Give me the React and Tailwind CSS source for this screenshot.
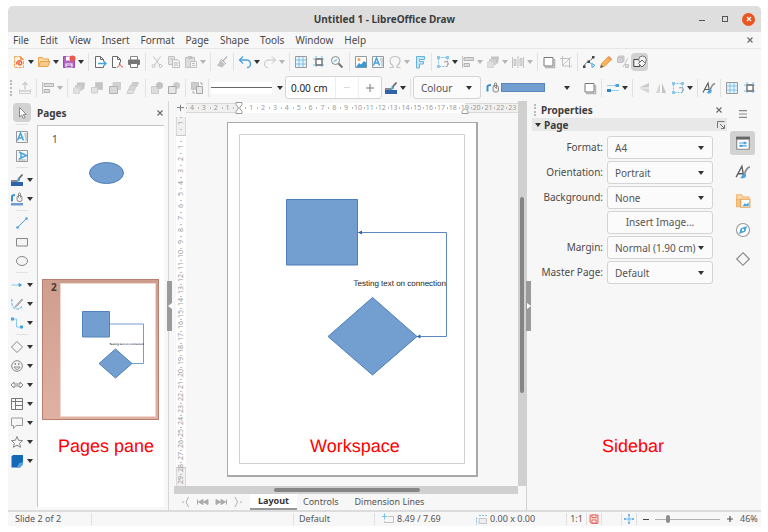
import React from "react";

const G = "#c2c2c2";
const D = "#6a6a6a";
const B = "#4aa3dc";

const icons = {
  newDoc: (
    <>
      <path d="M2.500 1.500h6l3 3v8h-9z" fill="#fdf3e7" stroke="#efa24c" strokeDasharray="3 1" />
      <path d="M8.500 1.500l3 3h-3z" fill="#f2994a" stroke="#f2994a" />
      <path d="M4.500 9.500c0-3 2-4 4-3.500s1.500 4-.5 4-2-2 0-2.500" stroke="#ee6a45" strokeWidth="1.500" />
    </>
  ),
  open: (
    <>
      <path d="M1.500 11.500v-9h4l1 1.500h5v2" fill="#fbd9a6" stroke="#eda24e" />
      <path d="M1.500 11.500l2-5h9.500l-2 5z" fill="#f9c98a" stroke="#eda24e" />
    </>
  ),
  save: (
    <>
      <path d="M1.500 1.500h9l2 2v9h-11z" fill="#b066c2" stroke="#9a48b0" />
      <path d="M4 1.500h5v4H4zM3.500 8.500h7v4h-7z" fill="#fff" />
      <path d="M4.500 10h5M4.500 11.500h5" stroke="#a04fb5" />
      <circle cx="10.500" cy="3.500" r="3" fill="#ef5350" />
    </>
  ),
  exportDoc: (
    <>
      <path d="M10.500 6V4.500l-3-3h-5v11h8v-1.500" fill="#fff" stroke={D} />
      <path d="M7.500 1.500v3h3" stroke={D} />
      <path d="M5 8.500h8M10.500 6l2.500 2.500-2.500 2.500" stroke={B} strokeWidth="1.300" />
    </>
  ),
  pdf: (
    <>
      <path d="M6 12.500H2.500v-11h5l3 3v3" fill="#fff" stroke={D} />
      <path d="M7.500 1.500v3h3" stroke={D} />
      <path d="M7 12.500c2-1 3-3 2.500-5 .5 3 1.500 4 3.500 4.500" stroke="#e0483e" />
    </>
  ),
  print: (
    <>
      <path d="M3.500 5V1.500h7V5" fill="#fff" stroke="#888" />
      <rect x="1" y="4.500" width="12" height="5.500" rx="1" fill="#757575" />
      <path d="M3.500 8.500h7v4h-7z" fill="#fff" stroke="#777" />
    </>
  ),
  cut: (
    <>
      <path d="M3.500 1.500l6 8.500M10.500 1.500l-6 8.500" stroke={G} />
      <circle cx="3.500" cy="11" r="1.500" stroke={G} />
      <circle cx="10.500" cy="11" r="1.500" stroke={G} />
    </>
  ),
  copy: (
    <>
      <path d="M1.500 1.500h6v8h-6z" fill="#e3e3e3" stroke={G} />
      <path d="M5.500 4.500h5l2 2v6h-7z" fill="#eee" stroke={G} />
      <path d="M7 8h4M7 10h4M3 4h3" stroke={G} />
    </>
  ),
  paste: (
    <>
      <path d="M1.500 2.500h9v10h-9z" fill="#ddd" stroke={G} />
      <path d="M4 1.500h4v2H4z" fill={G} stroke={G} />
      <path d="M6.500 6.500h6v6h-6z" fill="#f4f4f4" stroke={G} />
      <path d="M8 8.500h3M8 10.500h3" stroke={G} />
    </>
  ),
  brush: (
    <>
      <path d="M12 1.500L8 6" stroke={G} strokeWidth="1.800" />
      <path d="M5 4.500l5 5-3 3-5.500-2c2-1 3-3 3.500-6z" fill={G} />
      <path d="M6 4l5 5" stroke="#a5a5a5" />
    </>
  ),
  undo: <path d="M5 1.500L1.500 5 5 8.500M1.500 5H8c3 0 4.500 1.500 4.500 4S11 12.500 9 12.500" stroke={B} strokeWidth="1.300" />,
  redo: <path d="M9 1.500L12.500 5 9 8.500M12.500 5H6C3 5 1.500 6.500 1.500 9S3 12.500 5 12.500" stroke={G} />,
  grid: (
    <>
      <path d="M1.500 1.500h11v11h-11z" fill="#eaf5fc" stroke="#999" />
      <path d="M5 2v10M9 2v10M2 5h10M2 9h10" stroke="#7cc0e9" />
    </>
  ),
  snap: (
    <>
      <path d="M4 1v12M10 1v12M1 4h12M1 10h12" stroke="#74bce8" strokeDasharray="2 1" />
      <path d="M4 4h6v6H4z" fill="#fff" stroke={D} strokeWidth="1.300" />
    </>
  ),
  zoom: (
    <>
      <circle cx="5.500" cy="5.500" r="4" fill="#f3f8fb" stroke="#888" />
      <path d="M4 6.500l3-2" stroke="#7cc0e9" strokeWidth="1.500" />
      <path d="M8.500 8.500l4 4" stroke="#777" strokeWidth="2" />
    </>
  ),
  image: (
    <>
      <path d="M1.500 1.500h11v11h-11z" fill="#fff" stroke="#999" />
      <circle cx="5" cy="4.500" r="1.500" fill="#f6a04d" />
      <path d="M2 12l3-4 2 1.500L10 6l2.500 2v4.500H2z" fill="#3d97d3" />
    </>
  ),
  textbox: (
    <>
      <path d="M1.500 1.500h11v11h-11z" fill="#f2f9fd" stroke="#999" />
      <path d="M2.500 10.500L5.500 3l3 7.500M3.500 8h4" stroke={B} strokeWidth="1.500" />
      <path d="M9 4h3M9.500 6h2.500M10 8h2M10 10h2" stroke="#aaa" />
    </>
  ),
  vtextbox: (
    <>
      <path d="M1.500 1.500h11v11h-11z" fill="#f2f9fd" stroke="#999" />
      <path d="M4 3l7.500 3.500L4 10M6 4v5" stroke={B} strokeWidth="1.500" />
      <path d="M3 11h8" stroke="#aaa" />
    </>
  ),
  omega: <path d="M1.500 12.500h3.500v-1.500C3 9.500 2 8 2 6c0-3 2-4.500 5-4.500s5 1.500 5 4.500c0 2-1 3.500-3 5v1.500h3.500" stroke={G} strokeWidth="1.200" />,
  fontwork: <path d="M3.500 13V1.500h8v3h-5v2h4v2.500h-4v4z" fill="#c9e6f7" stroke="#63b2e2" />,
  transform: (
    <>
      <path d="M2.500 2.500h9v9h-9z" stroke="#7cc0e9" strokeDasharray="2 1" />
      <path d="M1 1h3v3H1zM10 1h3v3h-3zM1 10h3v3H1z" fill="#8bc8ec" />
      <path d="M8 7c3-1 5 0 4 3l-2 2" stroke="#999" />
    </>
  ),
  align: (
    <>
      <path d="M1.500 1v12" stroke={G} />
      <path d="M3 2.500h9.500v3H3zM3 8.500h5.500v3H3z" fill="#dcdcdc" stroke="#b3b3b3" />
    </>
  ),
  layersA: (
    <>
      <path d="M5 1.500h8l-1 7H5z" fill="#c4c4c4" />
      <path d="M3 4h7v6H3z" fill="#cfcfcf" />
      <path d="M1.500 7h6v5.500h-6z" fill="#e0e0e0" stroke="#d6d6d6" />
    </>
  ),
  layersB: (
    <>
      <path d="M5.500 1.500h7v7h-7z" fill="#c4c4c4" stroke="#cdcdcd" />
      <path d="M1.500 6.500h6v5.500h-6z" fill="#e2e2e2" stroke="#cecece" />
    </>
  ),
  layersC: (
    <>
      <path d="M5 1.500h7.500v7H5z" fill="#d2d2d2" stroke="#cdcdcd" />
      <path d="M1.500 5.500h8v7h-8z" fill="#d8d8d8" stroke="#b3b3b3" />
    </>
  ),
  layersD: (
    <>
      <path d="M6.500 1.500h6l-1.500 4h-6z" fill="#ccc" stroke="#cbcbcb" />
      <path d="M4 5h6l-1.500 4h-6z" fill="#d8d8d8" stroke="#cbcbcb" />
      <path d="M2.500 8.500h6l-1.500 4h-6z" fill="#e2e2e2" stroke="#cbcbcb" />
    </>
  ),
  frontOf: (
    <>
      <path d="M1.500 5.500h7v7h-7z" fill="#ddd" stroke="#cbcbcb" />
      <circle cx="9.500" cy="4.500" r="3.500" fill={G} />
    </>
  ),
  behind: (
    <>
      <circle cx="9.500" cy="4.500" r="3.500" fill="#ccc" />
      <path d="M1.500 5.500h7.500v7H1.500z" fill="#e6e6e6" stroke="#a8a8a8" />
    </>
  ),
  swap: (
    <>
      <path d="M1.500 1.500h7v7h-7z" fill="#ccc" stroke={G} />
      <path d="M6.500 5.500h6v7h-6z" fill="#e6e6e6" stroke="#a8a8a8" />
      <path d="M3 10v2h2M10 2h2v2" stroke="#aaa" />
    </>
  ),
  distribute: (
    <>
      <path d="M1.500 2v11M7 1v12M12.500 2v11" stroke={G} />
      <path d="M3 4.500h2v6H3zM9 3.500h2v7H9z" fill="#e4e4e4" stroke={G} />
    </>
  ),
  anchor: (
    <>
      <path d="M1.500 8v4.500h11V8" stroke="#d0d0d0" />
      <path d="M7 1.500v7M4.500 4L7 1.500 9.500 4M2 10h10" stroke="#cbcbcb" strokeWidth="1.300" />
    </>
  ),
  shadow: (
    <>
      <path d="M3 12.500h9.500V4" stroke="#b5b5b5" strokeWidth="1.500" />
      <path d="M2 2.500h9v8.500H2z" fill="#fff" stroke="#777" />
    </>
  ),
  crop: <path d="M3.500 1v10H13M1 3.500h9.500V13M3 11l9-9" stroke={G} />,
  points: (
    <>
      <path d="M2 12C3 6 8 8 11 2" stroke={D} />
      <path d="M7 7l4 3" stroke={B} />
      <path d="M1 10.500h2.500V13H1zM10 1h2.500v2.500H10zM5.500 5.500H8V8H5.500z" fill="#444" />
      <path d="M10 8.500l3 2-3 2z" fill="#fff" stroke={B} />
    </>
  ),
  pencil: (
    <>
      <path d="M1.500 12.500l1.500-4.500 6-6c1-1 4 1.500 3 3l-6 6z" fill="#f8b35f" stroke="#efa04a" />
      <path d="M1 13l1.200-3.500L4.500 12z" fill="#666" />
      <path d="M9.500 2l3 3" stroke="#ee8a61" strokeWidth="1.500" />
    </>
  ),
  extrude: (
    <>
      <path d="M1.500 2.500h5v5h-5zM1.500 2.500l1.500-1.500h5v5l-1.500 1.500" fill="#d2d2d2" stroke={G} />
      <path d="M12 3l-5 9" stroke={G} />
      <path d="M9.500 9.500h3v3h-3z" fill="#e2e2e2" stroke={G} />
    </>
  ),
  shapes: (
    <>
      <path d="M.8 4.500h6v7h-6z" fill="#f3f3f3" stroke="#444" />
      <circle cx="9.500" cy="4.800" r="3.800" fill="#f3f3f3" stroke="#777" />
      <path d="M9 5l3.500 3.500L9 12 5.500 8.500z" fill="#f3f3f3" stroke="#666" />
    </>
  ),
  lineColor: (
    <>
      <path d="M1 9h12v4H1z" fill="#2f62a8" />
      <path d="M1 8h6" stroke="#666" strokeWidth="1.500" />
      <path d="M12.500 1.500L8 6.500" stroke="#666" strokeWidth="1.800" />
      <path d="M8.500 5.500l1.500 1.500-3 2z" fill={B} stroke={B} />
    </>
  ),
  areaFill: (
    <>
      <path d="M1.500 10.500V5.500c0-1 1.500-1.500 3.500-1.500" stroke="#3a8fd0" strokeWidth="2" />
      <rect x="7" y="4.500" width="5.500" height="6.500" rx="2" fill="#eee" stroke="#8a8a8a" />
      <path d="M7.500 4.500l3 3V3c0-1.500-2-1.500-2 0v3" stroke="#8a8a8a" />
    </>
  ),
  fillColor: (
    <>
      <path d="M1 11h12v2.500H1z" fill="#6d9ad0" />
      <path d="M2 9.500V4.500c0-1 1-1.500 3-1.500" stroke="#3a8fd0" strokeWidth="2" />
      <rect x="7" y="3.500" width="5" height="6" rx="2" fill="#eee" stroke="#8a8a8a" />
      <path d="M8.500 5.500V2c0-1.500 2-1.500 2 0v3.500" stroke="#8a8a8a" />
    </>
  ),
  arrowStyle: (
    <>
      <path d="M1 9.500h12M1 4.500h12" stroke="#9bd0f0" />
      <path d="M1 8h4v3H1z" fill="#2d86c6" />
      <path d="M9.500 3H13v3H9.500z" fill={B} />
    </>
  ),
  flipV: (
    <>
      <path d="M12 2v4.500L2 6.500z" fill="#cbcbcb" />
      <path d="M12 12V7.500L2 7.500z" fill="#d6d6d6" />
    </>
  ),
  flipH: (
    <>
      <path d="M2 12h4V2z" fill="#d6d6d6" />
      <path d="M12 12H8V2z" fill="#c4c4c4" />
    </>
  ),
  character: (
    <>
      <path d="M1 11.500L6 2l1.500 8M3 8.500h4" stroke="#5e5e5e" strokeWidth="1.200" />
      <path d="M13 2.500c-3 1-4 4-4.500 6" stroke="#8c8c8c" strokeWidth="1.500" />
      <path d="M8.500 8c-2 0-2 3-4 4 2 1 6 .5 5-3z" fill={B} />
    </>
  ),
  pointer: <path d="M4.500 1.500v9.500l2.200-2 1.800 3.500 1.500-.8-1.700-3.300h3z" fill="#fff" stroke="#888" />,
  line: (
    <>
      <path d="M2.500 11.500l9-9" stroke={B} />
      <circle cx="2.500" cy="11.500" r="1.300" fill={B} />
      <circle cx="11.500" cy="2.500" r="1.300" fill={B} />
    </>
  ),
  rect: <path d="M1.500 3.500h11v7.500h-11z" fill="#f4f4f4" stroke="#888" />,
  ellipse: <ellipse cx="7" cy="7" rx="5.500" ry="4.500" stroke="#888" fill="#f4f4f4" />,
  lineArrow: (
    <>
      <path d="M1.500 7H10" stroke="#8bc8ec" />
      <path d="M9 5.500l2.500 1.500L9 8.500z" fill={B} stroke={B} />
    </>
  ),
  curve: (
    <>
      <path d="M2 2c-1 5 1 10 5 10s3-2 5-2" stroke="#7cc0e9" strokeWidth="1.300" strokeDasharray="3 1" />
      <path d="M12 2L6 8.500 5 10l2-1 5.500-6z" fill="#e5e5e5" stroke="#999" />
    </>
  ),
  connector: (
    <>
      <path d="M2.500 3h4v8h5" stroke="#8bc8ec" />
      <path d="M1 1.500h3v3H1zM10 9.500h3v3h-3z" fill={B} />
    </>
  ),
  diamond: <path d="M7 1.500L12.500 7 7 12.500 1.500 7z" fill="#f7f7f7" stroke="#888" />,
  smiley: (
    <>
      <circle cx="7" cy="7" r="5.300" stroke="#888" fill="#f7f7f7" />
      <path d="M4 8c1 3 5 3 6 0z" stroke="#888" />
      <path d="M4.500 5h1.500M8 5h1.500" stroke="#777" strokeWidth="1.500" />
    </>
  ),
  blockArrow: <path d="M1 7l3-3v2h6V4l3 3-3 3V8H4v2z" stroke="#888" fill="#f7f7f7" />,
  table: (
    <>
      <path d="M1.500 1.500h11v11h-11z" fill="#f7f7f7" stroke="#777" />
      <path d="M1.500 4.500h11M5.500 1.500v11M5.500 8.500h7" stroke="#777" />
    </>
  ),
  callout: <path d="M1.500 2h11v7.500H6l-2.500 3v-3h-2z" stroke="#999" fill="#f7f7f7" />,
  star: <path d="M7 1.500l1.600 3.800 4 .3-3 2.700 1 4L7 10.200 3.400 12.300l1-4-3-2.700 4-.3z" stroke="#888" fill="#f7f7f7" />,
  cube: (
    <>
      <path d="M1.500 2.500L3 1h10v9.500l-3 3H1.500z" fill="#1468b8" />
      <path d="M7 13.500l2-4 4-1.500v2.500l-3 3z" fill="#5ea4dc" />
    </>
  ),
  hamburger: <path d="M3.500 4h7M3.500 7h7M3.500 10h7" stroke="#888" />,
  propsDeck: (
    <>
      <path d="M1.500 2h11v10.500h-11z" fill="#fff" stroke="#888" />
      <path d="M1 1.500h12v2.500H1z" fill="#666" />
      <path d="M3.500 7h7M3.500 9.500h7" stroke={B} />
      <path d="M7.500 6h2v2h-2zM4.500 8.500h2v2h-2z" fill={B} />
    </>
  ),
  gallery: (
    <>
      <path d="M1.500 12V1.500h4L7 3.500h5V5" fill="#fbdcb0" stroke="#efb069" />
      <path d="M1.500 12V5.500h3V12z" fill="#f9c98a" stroke="#efb069" />
      <path d="M5 5.500h8V12.500H5z" fill="#fff" stroke="#e7a04f" />
      <path d="M6.500 11.500l2-2.500 1.500 1 2-2v3.500z" fill={B} />
    </>
  ),
  compass: (
    <>
      <circle cx="7" cy="7" r="5.700" fill="#fff" stroke="#999" />
      <path d="M10.500 3.500L9 8.500 3.500 10.500 5 5.500z" fill={B} />
      <circle cx="7" cy="7" r="1" fill="#fff" />
    </>
  ),
  first: <path d="M1.500 4.500v5M7 4.500L2.500 7 7 9.500zM12 4.500L7.500 7l4.500 2.500z" fill="#aaa" stroke="#aaa" />,
  last: <path d="M12.500 4.500v5M7 4.500L11.500 7 7 9.500zM2 4.500L6.500 7 2 9.500z" fill="#aaa" stroke="#aaa" />,
  prev: <path d="M10.500 2L8 7l2.500 5M4 7h2" stroke="#b0b0b0" />,
  next: <path d="M3 2l2.500 5L3 12M8 7h2" stroke="#b0b0b0" />,
  pos: (
    <>
      <path d="M3.500 1.500v6M1 4.500h5" stroke="#7cc0e9" />
      <path d="M7 4.500h5.500v6h-9V9" stroke="#c0c0c0" />
    </>
  ),
  size: (
    <>
      <path d="M2.500 5.500v7M5 3.500h8" stroke="#7cc0e9" strokeDasharray="2 1" />
      <path d="M5 6.500h7.500v5H5z" fill="#eee" stroke="#c6c6c6" />
    </>
  ),
  modified: (
    <>
      <path d="M3 3h8v8.500H4.500L3 10z" fill="#f9ccc8" stroke="#e26a62" />
      <path d="M5 3h4v2.500H5zM5 8h4v3H5z" fill="#fff" stroke="#e26a62" />
    </>
  ),
  fit: (
    <>
      <path d="M5.500 5.500h3v3h-3z" fill="#7cc0e9" />
      <path d="M7 2v2.500M7 9.500V12M2 7h2.500M9.500 7H12" stroke={B} strokeWidth="1.500" />
    </>
  ),
};

function Icon({ name, large }) {
  return (
    <svg viewBox="0 0 14 14" fill="none" aria-hidden="true" className={large ? "size-4 shrink-0" : "size-3.5 shrink-0"}>
      {icons[name]}
    </svg>
  );
}

function Caret({ dim }) {
  return (
    <svg viewBox="0 0 6 4" aria-hidden="true" className="h-1 w-1.5 shrink-0">
      <path d="M0 0h6L3 4z" fill={dim ? "#b5b5b5" : "#333"} />
    </svg>
  );
}

const Sep = () => (
  <span className="flex h-[18px] w-1.5 shrink-0 justify-center">
    <span className="w-px bg-[#e2e2e2]" />
  </span>
);

function Tool({ name, menu, dim, wide, active }) {
  return (
    <>
      <button
        type="button"
        aria-label={name}
        className={`flex h-[18px] shrink-0 items-center justify-center rounded-sm ${wide ? "w-[18px]" : "w-[17px]"} ${active ? "bg-[#d2d2d2]" : ""}`}
      >
        <Icon name={name} />
      </button>
      {menu && (
        <button type="button" aria-label={`${name} options`} className="flex h-[18px] w-2 shrink-0 items-center justify-center">
          <Caret dim={dim} />
        </button>
      )}
    </>
  );
}

function Tools({ items }) {
  return items.map((it, i) => {
    if (it === "|") return <Sep key={i} />;
    const [name, flags = ""] = it.split(":");
    return (
      <Tool
        key={i}
        name={name}
        menu={flags.includes("m")}
        dim={flags.includes("d")}
        wide={flags.includes("w")}
        active={flags.includes("a")}
      />
    );
  });
}

const standardBar = [
  "newDoc:m", "open:m", "save:m", "|", "exportDoc", "pdf", "print", "|", "cut", "copy", "paste:md", "|", "brush", "|",
  "undo:m", "redo:md", "|", "grid:w", "snap:w", "zoom:w", "|", "image", "textbox", "omega:md", "fontwork", "|",
  "transform:m", "align:md", "layersA:md", "distribute:md", "|", "shadow", "crop", "|", "points", "pencil", "extrude", "shapes:a",
];

const menus = ["File", "Edit", "View", "Insert", "Format", "Page", "Shape", "Tools", "Window", "Help"];

const Close = () => (
  <svg viewBox="0 0 8 8" className="size-2" aria-hidden="true">
    <path d="M1.500 1.500l5 5M6.500 1.500l-5 5" stroke="#666" strokeWidth="1.100" />
  </svg>
);

function TitleBar() {
  return (
    <header className="relative flex h-[26px] items-center justify-center rounded-t-[5px] bg-[#dedede]">
      <h1 className="text-[10px] font-bold text-[#3d3d3d]">Untitled 1 - LibreOffice Draw</h1>
      <div className="absolute right-1.5 flex items-center gap-[11px]">
        <button type="button" aria-label="Minimise" className="flex h-3 w-3 items-center justify-center">
          <span className="mt-0.5 h-px w-1.5 bg-[#555]" />
        </button>
        <button type="button" aria-label="Maximise" className="flex h-3 w-3 items-center justify-center">
          <span className="size-1.5 border border-[#555]" />
        </button>
        <button type="button" aria-label="Close window" className="flex size-[13px] items-center justify-center rounded-full bg-[#e95420]">
          <svg viewBox="0 0 8 8" className="size-2" aria-hidden="true">
            <path d="M2 2l4 4M6 2L2 6" stroke="#fff" strokeWidth="1.200" />
          </svg>
        </button>
      </div>
    </header>
  );
}

function MenuBar() {
  return (
    <nav className="flex h-[17px] items-center border-b border-[#e6e6e6] pl-[5px] pr-[7px]">
      <div className="flex flex-1 gap-[11px]">
        {menus.map((m) => (
          <button type="button" key={m} className="text-[10px] leading-4">{m}</button>
        ))}
      </div>
      <button type="button" aria-label="Close document"><Close /></button>
    </nav>
  );
}

function Dropdown({ id, label, value, className }) {
  return (
    <div className={`relative h-[23px] ${className}`}>
      <select
        id={id}
        aria-label={label}
        className="block h-[23px] w-full appearance-none rounded-[3px] border border-[#d4d4d4] bg-[#fbfbfb] pl-[7px] text-[10px] leading-4 text-[#555]"
      >
        <option>{value}</option>
      </select>
      <span className="pointer-events-none absolute inset-y-0 right-[9px] flex items-center"><Caret /></span>
    </div>
  );
}

function LineBar() {
  return (
    <div className="flex h-[27px] items-center">
      <span className="ml-0.5 mr-1 h-4 w-0.5 border-l-2 border-dotted border-[#bbb]" />
      <Tools
        items={["anchor", "|", "align:md", "|", "layersA:w", "layersB:w", "layersC:w", "layersD:w", "|", "frontOf", "behind", "|", "swap", "|"]}
      />
      <button type="button" aria-label="Line style" className="flex w-[74px] shrink-0 items-center gap-[5px]">
        <span className="flex h-3 w-[61px] items-center bg-white"><span className="h-px w-full bg-[#666]" /></span>
        <Caret />
      </button>
      <div className="flex h-[23px] w-[97px] shrink-0 items-center rounded-[3px] border border-[#d4d4d4] bg-white">
        <input aria-label="Line width" defaultValue="0.00 cm" className="h-full w-[49px] pl-[5px] text-[10px] text-[#222] outline-none" />
        <button type="button" aria-label="Decrease" className="flex h-full w-6 items-center justify-center border-l border-[#eee]">
          <span className="h-px w-1.5 bg-[#ddd]" />
        </button>
        <button type="button" aria-label="Increase" className="flex h-full w-6 items-center justify-center border-l border-[#eee]">
          <svg viewBox="0 0 8 8" className="size-2" aria-hidden="true"><path d="M4 0v8M0 4h8" stroke="#777" /></svg>
        </button>
      </div>
      <Tools items={["lineColor:m", "|"]} />
      <Dropdown label="Area style" value="Colour" className="w-[68px] shrink-0" />
      <span className="w-[3px]" />
      <Tools items={["areaFill"]} />
      <button type="button" aria-label="Fill colour" className="flex w-20 shrink-0 items-center gap-[19px]">
        <span className="h-[9px] w-11 border border-[#5b85bd] bg-[#729fcf]" />
        <Caret />
      </button>
      <Tools
        items={["shadow", "|", "arrowStyle:m", "|", "flipV", "flipH", "transform:m", "|", "character", "|", "grid:w", "snap:w"]}
      />
    </div>
  );
}

const drawTools = [
  "pointer:a", "|", "textbox", "vtextbox", "|", "lineColor:m", "fillColor:m", "|", "line", "rect", "ellipse", "|",
  "lineArrow:m", "curve:m", "connector:m", "|", "diamond:m", "smiley:m", "blockArrow:m", "table:m", "callout:m", "star:m", "cube:m",
];

function DrawBar() {
  return (
    <aside className="flex w-[29px] shrink-0 flex-col items-center pr-0.5 pt-0.5">
      {drawTools.map((it, i) => {
        if (it === "|") return <span key={i} className="flex h-[5px] w-3 items-center"><span className="h-px w-full bg-[#e2e2e2]" /></span>;
        const [name, flags = ""] = it.split(":");
        return (
          <button
            type="button"
            key={i}
            aria-label={name}
            className={`flex h-[19px] items-center justify-center gap-[3px] rounded-sm px-0.5 ${flags === "a" ? "bg-[#d2d2d2]" : ""}`}
          >
            <Icon name={name} />
            {flags === "m" && <Caret />}
          </button>
        );
      })}
    </aside>
  );
}

function Note({ children, className }) {
  return (
    <p className={`absolute whitespace-nowrap font-['Liberation_Sans',sans-serif] text-[18px] leading-5 text-[#ff0000] [text-rendering:geometricPrecision] ${className}`}>
      {children}
    </p>
  );
}

function PagesPane() {
  return (
    <section className="relative flex w-[127px] shrink-0 flex-col pb-[3px]">
      <div className="flex h-6 items-center justify-between">
        <h2 className="text-[10px] font-bold text-[#3d3d3d]">Pages</h2>
        <button type="button" aria-label="Close pages"><Close /></button>
      </div>
      <ol className="flex flex-1 flex-col gap-3 border-l border-t border-[#c6c6c6] bg-white pl-1 pr-[5px] pt-1 text-[10px]">
        <li className="relative h-[137px] w-[117px]">
          <span className="absolute left-2.5 top-0.5">1</span>
          <svg viewBox="0 0 117 137" className="h-full w-full" aria-hidden="true">
            <ellipse cx="64.500" cy="43" rx="17" ry="10.500" fill="#729fcf" stroke="#4f7fb8" />
          </svg>
        </li>
        <li className="relative h-[141px] w-[117px] border border-[#b67f6e] bg-linear-to-b from-[#cf9d8e] to-[#e0b1a3]">
          <span className="absolute left-2 top-0 font-bold text-[#4a3a36]">2</span>
          <svg viewBox="0 0 115 139" className="h-full w-full" aria-hidden="true">
            <path d="M17.500 3.500h95v133h-95z" fill="#fff" stroke="#f1d9d2" />
            <path d="M67 44h33.500v39.500H88" stroke="#729fcf" fill="none" />
            <path d="M39.500 31.500h27V57h-27zM72.500 69l16.500 14.500L72.500 98 56 83.500z" fill="#729fcf" stroke="#5382bc" />
          </svg>
          <span className="absolute right-3.5 top-[62px] whitespace-nowrap font-['Liberation_Sans',sans-serif] text-[3px] leading-[4px] text-black [text-rendering:geometricPrecision]">
            Testing text on connection
          </span>
        </li>
      </ol>
      <Note className="left-[21px] top-[335px]">Pages pane</Note>
    </section>
  );
}

function Grip({ flip, className }) {
  return (
    <button type="button" aria-label="Toggle panel" className={`absolute flex h-[50px] w-[5px] items-center justify-center bg-[#9a9a9a] ${className}`}>
      <svg viewBox="0 0 4 6" className="h-1.5 w-1" aria-hidden="true">
        <path d={flip ? "M0 0l4 3-4 3z" : "M4 0L0 3l4 3z"} fill="#fff" />
      </svg>
    </button>
  );
}

const hMarks = Array.from({ length: 28 }, (_, i) => i - 4);
const vMarks = Array.from({ length: 31 }, (_, i) => i - 1);

function HRuler() {
  return (
    <div className="relative flex h-[10px] flex-1 border-y border-[#d9d9d9] bg-[#f0f0f0]">
      <span className="absolute -inset-y-px left-[16%] right-[16%] bg-white" />
      {hMarks.map((n) => (
        <span key={n} className="relative flex min-w-0 flex-1 items-center justify-center text-[7px] leading-[8px] text-[#999]">
          <span className="absolute left-0 h-0.5 w-px bg-[#bbb]" />
          {n === 0 ? "" : Math.abs(n)}
        </span>
      ))}
      <svg viewBox="0 0 8 12" className="absolute -top-0.5 left-[16%] -ml-1 h-3 w-2" aria-hidden="true">
        <path d="M1 .5h6v2L4.500 6 7 9.500v2H1v-2L3.500 6 1 2.500z" fill="#fff" stroke="#999" />
      </svg>
      <svg viewBox="0 0 8 6" className="absolute -bottom-0.5 right-[16%] -mr-1 h-1.5 w-2" aria-hidden="true">
        <path d="M1 5.500v-2L4 .5l3 3v2z" fill="#fff" stroke="#999" />
      </svg>
    </div>
  );
}

function VRuler() {
  return (
    <div className="relative flex w-[10px] shrink-0 flex-col border-x border-[#d9d9d9] bg-[#f0f0f0]">
      <span className="absolute -inset-x-px bottom-[5%] top-[5%] border-y border-[#c9c9c9] bg-white" />
      {vMarks.map((n) => (
        <span
          key={n}
          className="relative flex min-h-0 flex-1 rotate-180 items-center justify-center text-[7px] leading-[8px] text-[#999] [writing-mode:vertical-rl]"
        >
          <span className="absolute bottom-0 h-px w-0.5 bg-[#bbb]" />
          {n === 0 ? "" : Math.abs(n)}
        </span>
      ))}
    </div>
  );
}

function Drawing() {
  return (
    <div className="relative h-[355px] w-[251px] border border-b-2 border-r-2 border-[#a9a9a9] bg-white">
      <svg viewBox="0 0 248 352" className="h-[352px] w-[248px]" aria-hidden="true">
        <path d="M11.500 11.500h225v329h-225z" fill="none" stroke="#cfcfcf" />
        <path d="M130 109.500h88.500v104H188" fill="none" stroke="#5b88c2" />
        <path d="M130 109.500l4-2v4zM188.500 213.500l4-2v4z" fill="#3465a4" />
        <path d="M58.500 76.500h71V142h-71zM144.500 174.500l44.500 39-44.500 38.500-44.500-38.500z" fill="#729fcf" stroke="#4d7db9" />
      </svg>
      <span className="absolute right-[30px] top-[156px] whitespace-nowrap font-['Liberation_Sans',sans-serif] text-[8px] leading-[10px] text-[#222] [text-rendering:geometricPrecision]">
        Testing text on connection
      </span>
    </div>
  );
}

function Workspace() {
  return (
    <section className="relative flex min-w-0 flex-1 flex-col">
      <div className="flex flex-1">
        <div className="flex min-w-0 flex-1 flex-col">
          <div className="flex h-4 items-center pb-0.5 pl-0.5">
            <svg viewBox="0 0 10 10" className="mr-px size-[9px] shrink-0" aria-hidden="true">
              <path d="M5 1v7M1 4h8" stroke="#777" />
            </svg>
            <HRuler />
          </div>
          <div className="flex flex-1 pl-0.5">
            <VRuler />
            <div className="flex flex-1 justify-center pl-px pt-[5px]">
              <Drawing />
            </div>
          </div>
        </div>
        <div className="flex w-2 shrink-0 flex-col items-center bg-[#d0d0d0] pt-24">
          <span className="h-[196px] w-1 rounded-full bg-[#858585]" />
        </div>
      </div>
      <div className="mr-2 flex h-2 items-center bg-[#d0d0d0] pl-[100px]">
        <span className="h-1 w-[146px] rounded-full bg-[#858585]" />
      </div>
      <div className="flex h-4 text-[9px] text-[#555]">
        <div className="flex w-[76px] items-center gap-1 pl-1">
          {["prev", "first", "last", "next"].map((n) => (
            <button type="button" key={n} aria-label={`${n} tab`}><Icon name={n} /></button>
          ))}
        </div>
        <button type="button" className="border-b-2 border-[#999] bg-white px-2 font-bold leading-[14px] text-[#333]">Layout</button>
        <button type="button" className="px-1.5 leading-[14px]">Controls</button>
        <button type="button" className="px-2.5 leading-[14px]">Dimension Lines</button>
      </div>
      <Note className="left-[136px] top-[335px]">Workspace</Note>
    </section>
  );
}

const fields = [
  ["Format:", "A4"],
  ["Orientation:", "Portrait"],
  ["Background:", "None"],
  null,
  ["Margin:", "Normal (1.90 cm)"],
  ["Master Page:", "Default"],
];

function Sidebar() {
  return (
    <section className="relative flex w-[235px] shrink-0 border-l border-[#d2d2d2] pl-[5px]">
      <div className="w-[195px] pt-px">
        <div className="flex h-4 items-center pr-1">
          <span className="ml-0.5 mr-[5px] h-3 border-l-2 border-dotted border-[#bbb]" />
          <h2 className="flex-1 text-[10px] font-bold text-[#3d3d3d]">Properties</h2>
          <button type="button" aria-label="Close sidebar"><Close /></button>
        </div>
        <div className="flex h-[13px] items-center bg-[#e8e8e8] pl-[3px] pr-0.5">
          <Caret />
          <h3 className="ml-[3px] flex-1 text-[10px] font-bold leading-3 text-[#3d3d3d]">Page</h3>
          <button type="button" aria-label="More options">
            <svg viewBox="0 0 8 8" className="size-2" fill="none" stroke="#777" aria-hidden="true">
              <path d="M.5 7V.5h7M3 3l4 4M7.500 4v3.500H4" />
            </svg>
          </button>
        </div>
        <div className="flex flex-col gap-0.5 pr-3.5 pt-[5px]">
          {fields.map((f, i) =>
            f ? (
              <div key={i} className="flex items-center justify-end gap-1">
                <label htmlFor={`field-${i}`} className="text-[10px]">{f[0]}</label>
                <Dropdown id={`field-${i}`} value={f[1]} className="w-[106px]" />
              </div>
            ) : (
              <button key={i} type="button" className="h-[23px] w-[106px] self-end rounded-[3px] border border-[#d4d4d4] bg-[#fbfbfb] text-[10px] text-[#555]">
                Insert Image...
              </button>
            )
          )}
        </div>
      </div>
      <div className="flex flex-1 flex-col items-center gap-[5px] pr-[3px] pt-px">
        {["hamburger", "propsDeck", "character", "gallery", "compass", "diamond"].map((n, i) => (
          <button
            type="button"
            key={n}
            aria-label={n}
            className={`flex h-6 w-[25px] items-center justify-center rounded-[3px] ${i === 1 ? "bg-[#d2d2d2]" : ""}`}
          >
            <Icon name={n} large />
          </button>
        ))}
      </div>
      <Grip flip className="-left-px top-[180px]" />
      <Note className="left-[75px] top-[335px]">Sidebar</Note>
    </section>
  );
}

function StatusBar() {
  const cell = "flex h-3 items-center border-r border-[#e0e0e0]";
  return (
    <footer className="flex h-4 items-center border-t-2 border-[#dcdcdc] text-[9px] text-[#555]">
      <span className={`${cell} w-[84px] pl-[7px]`}>Slide 2 of 2</span>
      <span className={`${cell} flex-1`} />
      <span className={`${cell} w-[81px] pl-[5px]`}>Default</span>
      <span className="flex w-[94px] items-center gap-0.5 pl-1.5"><Icon name="pos" />8.49 / 7.69</span>
      <span className={`${cell} w-[98px] gap-0.5 pl-[5px]`}><Icon name="size" />0.00 x 0.00</span>
      <span className={`${cell} w-5 justify-center`}>1:1</span>
      <span className={`${cell} w-[15px] justify-center`}><Icon name="modified" /></span>
      <span className={`${cell} w-5`} />
      <button type="button" aria-label="Fit page" className={`${cell} w-[15px] justify-center`}><Icon name="fit" /></button>
      <div className="flex w-[124px] items-center gap-1.5 pl-1.5">
        <button type="button" aria-label="Zoom out" className="h-px w-1.5 bg-[#444]" />
        <input
          type="range"
          aria-label="Zoom"
          defaultValue="18"
          className="h-2 w-[65px] appearance-none bg-[linear-gradient(#b0b0b0,#b0b0b0)] bg-size-[100%_1px] bg-center bg-no-repeat [&::-webkit-slider-thumb]:h-2 [&::-webkit-slider-thumb]:w-1 [&::-webkit-slider-thumb]:appearance-none [&::-webkit-slider-thumb]:rounded-sm [&::-webkit-slider-thumb]:bg-[#8e8e8e]"
        />
        <button type="button" aria-label="Zoom in">
          <svg viewBox="0 0 8 8" className="size-2" aria-hidden="true"><path d="M4 1v6M1 4h6" stroke="#555" strokeWidth="1.200" /></svg>
        </button>
        <span>46%</span>
      </div>
    </footer>
  );
}

export default function App() {
  return (
    <div className="flex min-h-screen flex-col bg-white pb-1.5 pl-2 pr-[7px] pt-1.5 font-['Noto_Sans','Open_Sans',sans-serif] text-[#4a4a4a]">
      <div className="flex flex-1 flex-col rounded-t-[5px] bg-[#f7f7f7]">
        <TitleBar />
        <MenuBar />
        <div className="flex h-[25px] items-center pl-0.5">
          <Tools items={standardBar} />
        </div>
        <LineBar />
        <main className="flex flex-1">
          <DrawBar />
          <PagesPane />
          <div className="relative w-2.5 shrink-0">
            <span className="absolute inset-y-0 left-1 w-px bg-[#d6d6d6]" />
            <Grip className="left-[3px] top-[180px]" />
          </div>
          <Workspace />
          <Sidebar />
        </main>
        <StatusBar />
      </div>
    </div>
  );
}
